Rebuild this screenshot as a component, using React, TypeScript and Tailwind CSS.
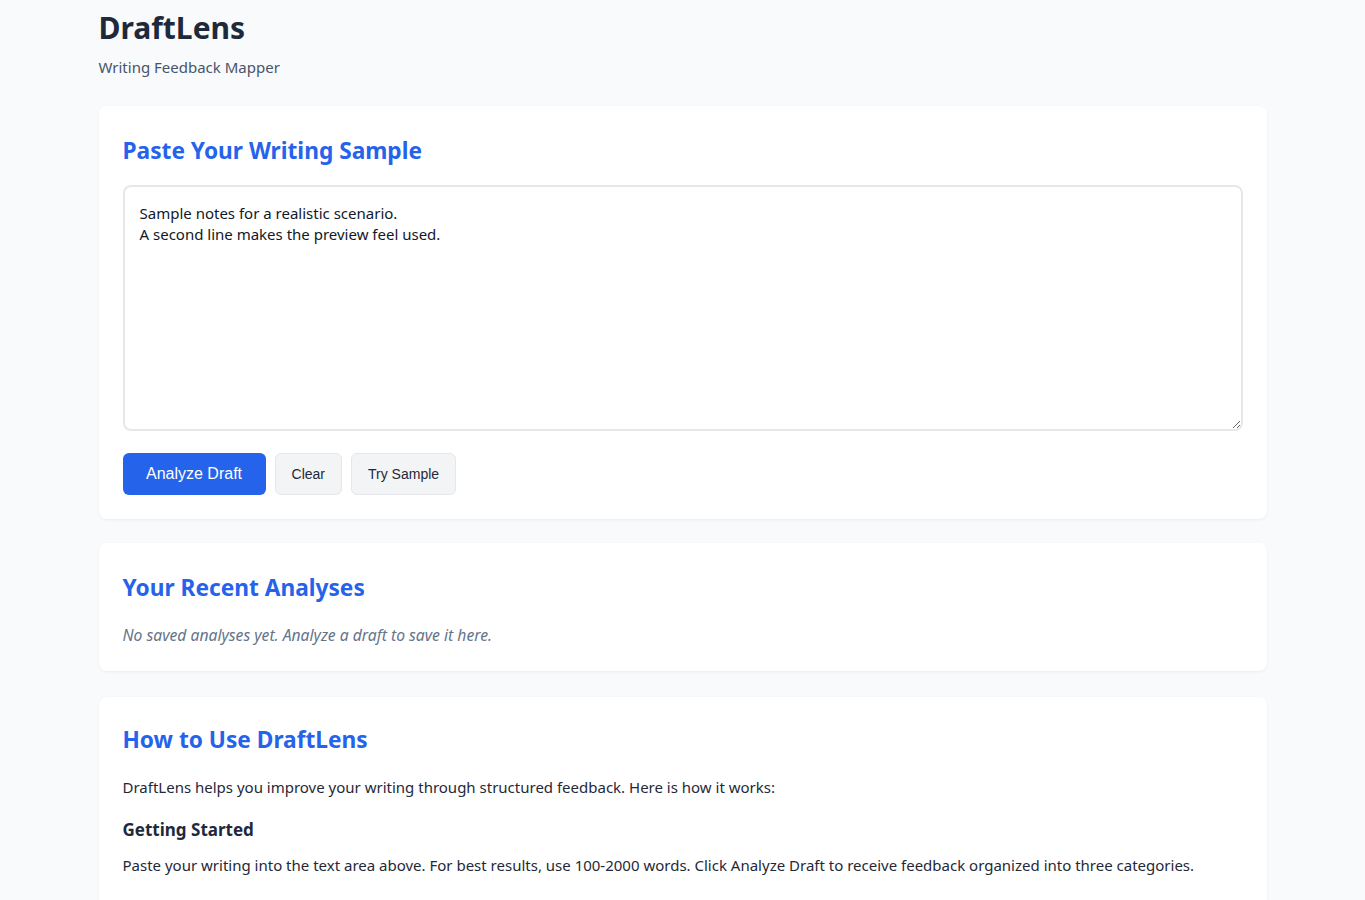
import React, { useState } from 'react';

const SAMPLE = 'Sample notes for a realistic scenario.\nA second line makes the preview feel used.';

const App = () => {
  const [draft, setDraft] = useState(SAMPLE);

  return (
    <div className="min-h-screen bg-[#f8fafc] font-['Noto_Sans',sans-serif] text-[#1f2937]">
      <div className="mx-auto max-w-[1200px] px-4 pb-6">
        <header className="pt-[8px] pb-[27px]">
          <h1 className="text-[30px] font-bold leading-[40px] text-[#1e293b]">DraftLens</h1>
          <p className="mt-[7px] text-[15px] leading-6 text-[#475569]">Writing Feedback Mapper</p>
        </header>

        <section className="rounded-lg bg-white p-6 shadow-[0_1px_3px_rgba(0,0,0,0.06)]">
          <h2 className="mb-[18px] pt-[5px] text-[22.7px] font-bold leading-8 text-[#2563eb]">Paste Your Writing Sample</h2>
          <textarea
            value={draft}
            onChange={(e) => setDraft(e.target.value)}
            className="block h-[246px] w-full resize-y rounded-lg border-2 border-[#e5e7eb] px-[15px] py-[16px] text-[15px] leading-[21px] text-[#111827] outline-none"
          />
          <div className="mt-[22px] flex gap-[9px]">
            <button className="h-[42px] rounded-md bg-[#2563eb] px-[23.5px] font-['Liberation_Sans',sans-serif] text-[16px] text-white">
              Analyze Draft
            </button>
            <button
              onClick={() => setDraft('')}
              className="h-[42px] rounded-md border border-[#e5e7eb] bg-[#f3f4f6] px-4 font-['Liberation_Sans',sans-serif] text-[14px] text-[#1f2937]"
            >
              Clear
            </button>
            <button
              onClick={() => setDraft(SAMPLE)}
              className="h-[42px] rounded-md border border-[#e5e7eb] bg-[#f3f4f6] px-4 font-['Liberation_Sans',sans-serif] text-[14px] text-[#1f2937]"
            >
              Try Sample
            </button>
          </div>
        </section>

        <section className="mt-6 rounded-lg bg-white p-6 shadow-[0_1px_3px_rgba(0,0,0,0.06)]">
          <h2 className="pt-[5px] text-[22.7px] font-bold leading-8 text-[#2563eb]">Your Recent Analyses</h2>
          <p className="mt-[19px] text-[15.7px] italic leading-6 text-[#64748b]">
            No saved analyses yet. Analyze a draft to save it here.
          </p>
        </section>

        <section className="mt-[26px] rounded-lg bg-white p-6 shadow-[0_1px_3px_rgba(0,0,0,0.06)]">
          <h2 className="pt-[3px] text-[22.7px] font-bold leading-8 text-[#2563eb]">How to Use DraftLens</h2>
          <p className="mt-[19px] text-[15px] leading-6 text-[#1f2937]">
            DraftLens helps you improve your writing through structured feedback. Here is how it works:
          </p>
          <h3 className="mt-[17px] text-[17px] font-bold leading-7 text-[#1e293b]">Getting Started</h3>
          <p className="mt-[9px] text-[15px] leading-6 text-[#1f2937]">
            Paste your writing into the text area above. For best results, use 100-2000 words. Click Analyze Draft to receive feedback organized into three categories.
          </p>
          <h3 className="mt-[18px] text-[17px] font-bold leading-7 text-[#1e293b]">Understanding Feedback</h3>
          <p className="mt-[9px] text-[15px] leading-6 text-[#1f2937]">
            Each suggestion is grouped by clarity, structure and style so you can revise one layer at a time.
          </p>
        </section>
      </div>
    </div>
  );
};

export default App;
